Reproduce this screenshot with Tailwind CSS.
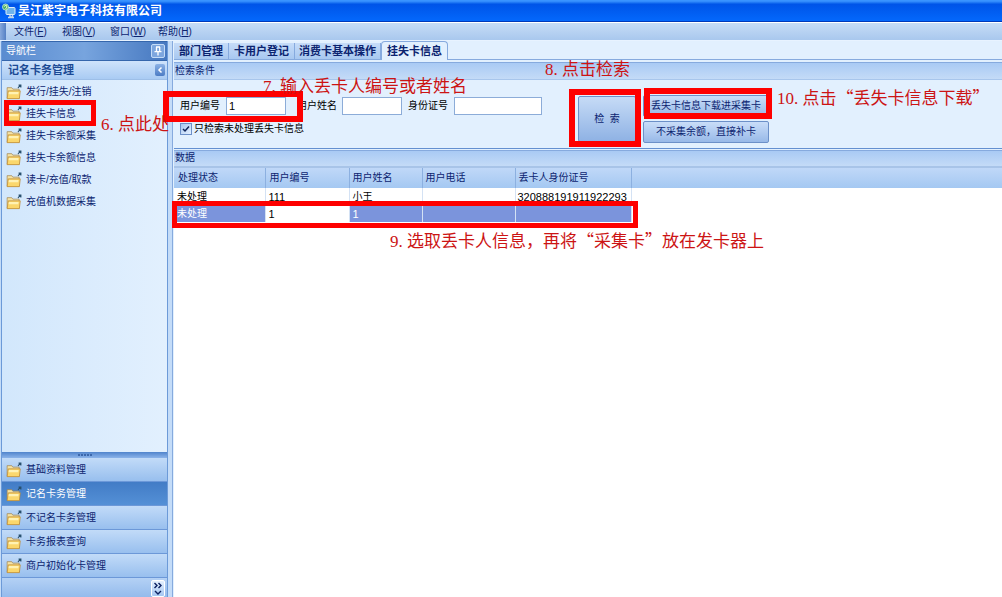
<!DOCTYPE html>
<html lang="zh-CN">

<head>
    <meta charset="UTF-8">
    <meta name="viewport" content="width=device-width, initial-scale=1.0">
    <title>吴江紫宇电子科技有限公司</title>
    <script src="https://cdn.jsdelivr.net/npm/@tailwindcss/browser@4"></script>
</head>

<body class="relative flex h-screen flex-col overflow-hidden bg-[#c4dcf8] font-['Liberation_Sans','Noto_Sans_CJK_SC',sans-serif] text-[10px] leading-4 text-[#0c2470]">

    <!-- shared icons -->
    <svg class="hidden">
        <symbol id="folder" viewBox="0 0 14 14">
            <path d="M1 4.500V3.200h4l1 1.300h5.500v8H1z" fill="#f4e2a4" stroke="#a08048" stroke-width=".6" />
            <path d="M1 12.800 2 6h10.500l-.8 6.800z" fill="#fbd76c" stroke="#b88430" stroke-width=".6" />
            <path d="M2.500 7h8.500l-.3 2H2.200z" fill="#fff2b4" />
            <path d="M10.500 3.500 12.500 1M11 1h2v2" fill="none" stroke="#28506e" stroke-width="1" />
        </symbol>
    </svg>

    <header class="flex h-[22px] shrink-0 items-center gap-0.5 border-b border-[#0038b8] bg-linear-to-b from-[#3a94ff] from-5% via-[#0054e8] via-20% to-[#0468fc] px-0.5">
        <svg class="h-4 w-3.5" viewBox="0 0 14 16">
            <rect x="4" y="4.500" width="9" height="7" rx="1" fill="#6fb4ec" stroke="#dceefa" />
            <path d="M6 14.500h6M8 12v2h2.500v-2" fill="none" stroke="#c3d7ea" stroke-width="1.500" />
            <circle cx="3.500" cy="4" r="3" fill="#48b072" stroke="#c8f0d8" stroke-width=".8" />
            <path d="M2 3.500 4 2l1 2-1.500 2" fill="none" stroke="#e8f8c0" />
        </svg>
        <h1 class="text-[12px] font-bold text-white">吴江紫宇电子科技有限公司</h1>
    </header>

    <nav class="flex h-[18px] shrink-0 items-center gap-3 border-t border-white bg-linear-to-b from-[#c6dcf6] to-[#a9c8ee] pr-2">
        <span class="-mr-1 h-full w-1.5 bg-linear-to-r from-[#86a8dc] to-[#5580c4]"></span>
        <button class="w-9 text-left whitespace-nowrap">文件(<u>F</u>)</button>
        <button class="w-9 text-left whitespace-nowrap">视图(<u>V</u>)</button>
        <button class="w-9 text-left whitespace-nowrap">窗口(<u>W</u>)</button>
        <button class="w-9 text-left whitespace-nowrap">帮助(<u>H</u>)</button>
    </nav>

    <div class="flex min-h-0 flex-1 border-t border-[#e8f3ff]">

        <!-- navigation bar -->
        <aside class="mr-1 ml-px flex w-[167px] shrink-0 flex-col border-x border-[#6c9ad8] bg-[#d8ebfd]">
            <div class="flex h-5 shrink-0 items-center justify-between border-y border-[#3566ac] bg-linear-to-r from-[#5a8cd0] via-[#77a4de] to-[#4678c0] pr-0.5 pl-1">
                <span class="text-white">导航栏</span>
                <button aria-label="固定" class="flex size-3.5 items-center justify-center rounded-xs border border-[#c4dcf8] bg-[#7da6de]">
                    <svg class="size-2.5" viewBox="0 0 10 10" fill="none" stroke="#fff" stroke-width="1.300">
                        <path d="M3 1h4M3.500 1v4.500M6.700 1v4.500M1.500 5.700h7M5 6v3.500" />
                    </svg>
                </button>
            </div>
            <div class="flex h-[19px] shrink-0 items-center justify-between border-b border-[#9dbfe8] bg-linear-to-b from-[#cfe3fb] to-[#a9cbf3] pr-0.5 pl-1.5">
                <h2 class="text-[11px] font-bold text-[#1c4a94]">记名卡务管理</h2>
                <button aria-label="折叠" class="flex h-3 w-2.5 items-center justify-center rounded-xs bg-linear-to-b from-[#8cb2e6] to-[#4c7cc4]">
                    <svg class="size-2" viewBox="0 0 8 8" fill="none" stroke="#fff" stroke-width="1.500">
                        <path d="M5.500 1.500 3 4l2.500 2.500" />
                    </svg>
                </button>
            </div>

            <ul class="min-h-0 flex-1 bg-linear-to-r from-[#d2e7fc] to-[#e2f0fe] pt-px">
                <li><a href="#" class="flex h-[22px] items-center gap-1 pl-1"><svg class="size-4"><use href="#folder" /></svg>发行/挂失/注销</a></li>
                <li><a href="#" class="flex h-[22px] items-center gap-1 pl-1"><svg class="size-4"><use href="#folder" /></svg>挂失卡信息</a></li>
                <li><a href="#" class="flex h-[22px] items-center gap-1 pl-1"><svg class="size-4"><use href="#folder" /></svg>挂失卡余额采集</a></li>
                <li><a href="#" class="flex h-[22px] items-center gap-1 pl-1"><svg class="size-4"><use href="#folder" /></svg>挂失卡余额信息</a></li>
                <li><a href="#" class="flex h-[22px] items-center gap-1 pl-1"><svg class="size-4"><use href="#folder" /></svg>读卡/充值/取款</a></li>
                <li><a href="#" class="flex h-[22px] items-center gap-1 pl-1"><svg class="size-4"><use href="#folder" /></svg>充值机数据采集</a></li>
            </ul>

            <div class="flex h-1.5 shrink-0 items-center justify-center gap-px bg-linear-to-b from-[#5084cc] to-[#8cb4ea]">
                <i class="size-0.5 bg-[#3c68ac]"></i><i class="size-0.5 bg-[#3c68ac]"></i><i class="size-0.5 bg-[#3c68ac]"></i><i class="size-0.5 bg-[#3c68ac]"></i><i class="size-0.5 bg-[#3c68ac]"></i>
            </div>

            <ul class="shrink-0">
                <li><a href="#" class="flex h-6 items-center gap-1 border-b border-[#6c98d8] bg-linear-to-b from-[#c2dbf8] to-[#98bfee] pl-1"><svg class="size-4"><use href="#folder" /></svg>基础资料管理</a></li>
                <li><a href="#" class="flex h-6 items-center gap-1 border-b border-[#6c98d8] bg-linear-to-b from-[#427cc6] to-[#5490d6] pl-1 text-white"><svg class="size-4"><use href="#folder" /></svg>记名卡务管理</a></li>
                <li><a href="#" class="flex h-6 items-center gap-1 border-b border-[#6c98d8] bg-linear-to-b from-[#c2dbf8] to-[#98bfee] pl-1"><svg class="size-4"><use href="#folder" /></svg>不记名卡务管理</a></li>
                <li><a href="#" class="flex h-6 items-center gap-1 border-b border-[#6c98d8] bg-linear-to-b from-[#c2dbf8] to-[#98bfee] pl-1"><svg class="size-4"><use href="#folder" /></svg>卡务报表查询</a></li>
                <li><a href="#" class="flex h-6 items-center gap-1 border-b border-[#6c98d8] bg-linear-to-b from-[#c2dbf8] to-[#98bfee] pl-1"><svg class="size-4"><use href="#folder" /></svg>商户初始化卡管理</a></li>
            </ul>
            <div class="flex h-[19px] shrink-0 justify-end bg-linear-to-b from-[#b4d1f5] to-[#94bbec] pt-0.5 pr-0.5">
                <button aria-label="更多" class="flex w-3.5 items-center justify-center rounded-xs border border-white bg-linear-to-b from-[#e4f0fe] to-[#a4c6f2]">
                    <svg class="h-4 w-2.5" viewBox="0 0 10 16" fill="none" stroke="#0c2060" stroke-width="1.400">
                        <path d="M1.500 2 4 4.500 1.500 7M5.500 2 8 4.500 5.500 7M2 10l3 3 3-3" />
                    </svg>
                </button>
            </div>
        </aside>

        <main class="flex min-w-0 flex-1 flex-col border-l border-[#86aade] bg-[#e2f0fe] pl-px">
            <div role="tablist" class="flex h-[19px] shrink-0 items-end border-b border-[#86aade] text-[11px] font-bold">
                <button role="tab" class="h-4 border-r border-[#86aade] bg-linear-to-b from-[#c6dcf8] to-[#a8c8f0] px-[5px] whitespace-nowrap">部门管理</button>
                <button role="tab" class="h-4 border-r border-[#86aade] bg-linear-to-b from-[#c6dcf8] to-[#a8c8f0] px-[5px] whitespace-nowrap">卡用户登记</button>
                <button role="tab" class="h-4 border-r border-[#86aade] bg-linear-to-b from-[#c6dcf8] to-[#a8c8f0] px-1 whitespace-nowrap">消费卡基本操作</button>
                <button role="tab" aria-selected="true" class="-mb-px h-[19px] rounded-t-sm border border-b-0 border-[#86aade] bg-[#e2f0fe] px-[5px] whitespace-nowrap">挂失卡信息</button>
            </div>

            <section class="mt-0.5 shrink-0 border-b border-[#6490d0]">
                <h2 class="h-[18px] border-y border-t-[#86aade] border-b-[#a8c6ec] bg-linear-to-b from-[#a9caf4] to-[#c4dbf7] px-px">检索条件</h2>
                <form class="flex h-[68px] items-start pt-2.5 pl-1.5 text-black" onsubmit="return false">
                    <div>
                        <div class="mt-[7px] flex h-[18px] items-center">
                            <label for="no" class="w-[46px] shrink-0">用户编号</label>
                            <input id="no" value="1" class="mr-[11px] h-[18px] w-[60px] border border-[#8cacd8] bg-white px-0.5 text-[11px]">
                            <label for="name" class="w-[45px] shrink-0">用户姓名</label>
                            <input id="name" class="mr-1.5 h-[18px] w-[60px] border border-[#8cacd8] bg-white px-0.5 text-[11px]">
                            <label for="idcard" class="w-[46px] shrink-0">身份证号</label>
                            <input id="idcard" class="h-[18px] w-[88px] border border-[#8cacd8] bg-white px-0.5 text-[11px]">
                        </div>
                        <label class="relative mt-1.5 flex h-4 items-center gap-0.5">
                            <input type="checkbox" checked class="peer size-3 appearance-none border border-[#6c90c8] bg-linear-to-br from-[#a8c8f0] to-[#e4f0ff]">
                            <svg class="pointer-events-none absolute top-0.5 left-0 hidden size-3 peer-checked:block" viewBox="0 0 12 12" fill="none" stroke="#102458" stroke-width="1.500">
                                <path d="m3 6 2 2 4-4.500" />
                            </svg>
                            只检索未处理丢失卡信息
                        </label>
                    </div>
                    <button class="mt-1.5 ml-9 h-[46px] w-[58px] rounded-xs border border-[#6c90c8] bg-linear-to-b from-[#c6dbf6] to-[#8fb2e4] whitespace-pre text-[#0c2470]">检  索</button>
                    <div class="ml-[7px] flex w-[126px] flex-col gap-1 pt-[5px]">
                        <button class="h-[22px] rounded-xs border border-[#6c90c8] bg-linear-to-b from-[#c9ddf8] to-[#98b9e8] text-[#0c2470]">丢失卡信息下载进采集卡</button>
                        <button class="h-[22px] rounded-xs border border-[#6c90c8] bg-linear-to-b from-[#c9ddf8] to-[#98b9e8] text-[#0c2470]">不采集余额，直接补卡</button>
                    </div>
                </form>
            </section>

            <section class="mt-px flex min-h-0 flex-1 flex-col">
                <h2 class="h-4 shrink-0 border-t border-[#86aade] bg-linear-to-b from-[#a9caf4] to-[#c4dbf7] px-px leading-[14px]">数据</h2>
                <div class="min-h-0 flex-1 border-t-2 border-[#a8c4e8] bg-white">
                    <table class="w-full table-fixed border-collapse text-black">
                        <colgroup>
                            <col class="w-[91px]">
                            <col class="w-[84px]">
                            <col class="w-[73px]">
                            <col class="w-[93px]">
                            <col class="w-[116px]">
                            <col>
                        </colgroup>
                        <thead>
                            <tr class="h-5 bg-linear-to-b from-[#c0d8f8] to-[#a4c8f2] text-left text-[#0c2470]">
                                <th class="border-r border-[#8cb0e0] px-1 font-normal">处理状态</th>
                                <th class="border-r border-[#8cb0e0] px-1 font-normal">用户编号</th>
                                <th class="border-r border-[#8cb0e0] px-[3px] font-normal">用户姓名</th>
                                <th class="border-r border-[#8cb0e0] px-[3px] font-normal">用户电话</th>
                                <th class="border-r border-[#8cb0e0] px-[3px] font-normal">丢卡人身份证号</th>
                                <td></td>
                            </tr>
                        </thead>
                        <tbody>
                            <tr class="h-[17px]">
                                <td class="border-r border-[#d4e2f4] px-[3px]">未处理</td>
                                <td class="border-r border-[#d4e2f4] px-[3px] text-[11px]">111</td>
                                <td class="border-r border-[#d4e2f4] px-[3px]">小王</td>
                                <td class="border-r border-[#d4e2f4] px-[3px]"></td>
                                <td class="border-r border-[#d4e2f4] px-0.5 text-[11px]">320888191911922293</td>
                                <td></td>
                            </tr>
                            <tr class="h-[17px] text-white">
                                <td class="border-r border-[#d4e2f4] bg-[#7b94dc] px-[3px]">未处理</td>
                                <td class="border-r border-[#d4e2f4] px-[3px] text-[11px] text-black">1</td>
                                <td class="border-r border-[#d4e2f4] bg-[#7b94dc] px-[3px] text-[11px]">1</td>
                                <td class="border-r border-[#d4e2f4] bg-[#7b94dc]"></td>
                                <td class="border-r border-[#d4e2f4] bg-[#7b94dc]"></td>
                                <td></td>
                            </tr>
                        </tbody>
                    </table>
                </div>
            </section>
        </main>
    </div>

    <!-- step marks drawn over the window -->
    <div class="pointer-events-none absolute inset-0 font-['Noto_Sans_CJK_SC',sans-serif] text-[17px] leading-5 whitespace-nowrap text-[#cc1414]">
        <div class="absolute top-[100px] left-1 h-[26px] w-[92px] border-[5px] border-[#fe0000]"></div>
        <div class="absolute top-[91px] left-[163px] h-[31px] w-[140px] border-6 border-[#fe0000]"></div>
        <div class="absolute top-[89px] left-[569px] h-[58px] w-[72px] border-6 border-[#fe0000]"></div>
        <div class="absolute top-[88px] left-[644px] h-[31px] w-[128px] border-6 border-[#fe0000]"></div>
        <div class="absolute top-[201px] left-[172px] h-[27px] w-[466px] border-[5px] border-[#fe0000]"></div>

        <p class="absolute top-[113px] left-[101px]"><span class="font-['Liberation_Serif',serif]">6. </span>点此处</p>
        <p class="absolute top-[75px] left-[263px]"><span class="font-['Liberation_Serif',serif]">7. </span>输入丢卡人编号或者姓名</p>
        <p class="absolute top-[58px] left-[545px]"><span class="font-['Liberation_Serif',serif]">8. </span>点击检索</p>
        <p class="absolute top-[230px] left-[390px]"><span class="font-['Liberation_Serif',serif]">9. </span>选取丢卡人信息，再将“采集卡”放在发卡器上</p>
        <p class="absolute top-[87px] left-[777px]"><span class="font-['Liberation_Serif',serif]">10. </span>点击“丢失卡信息下载”</p>
    </div>
</body>

</html>
